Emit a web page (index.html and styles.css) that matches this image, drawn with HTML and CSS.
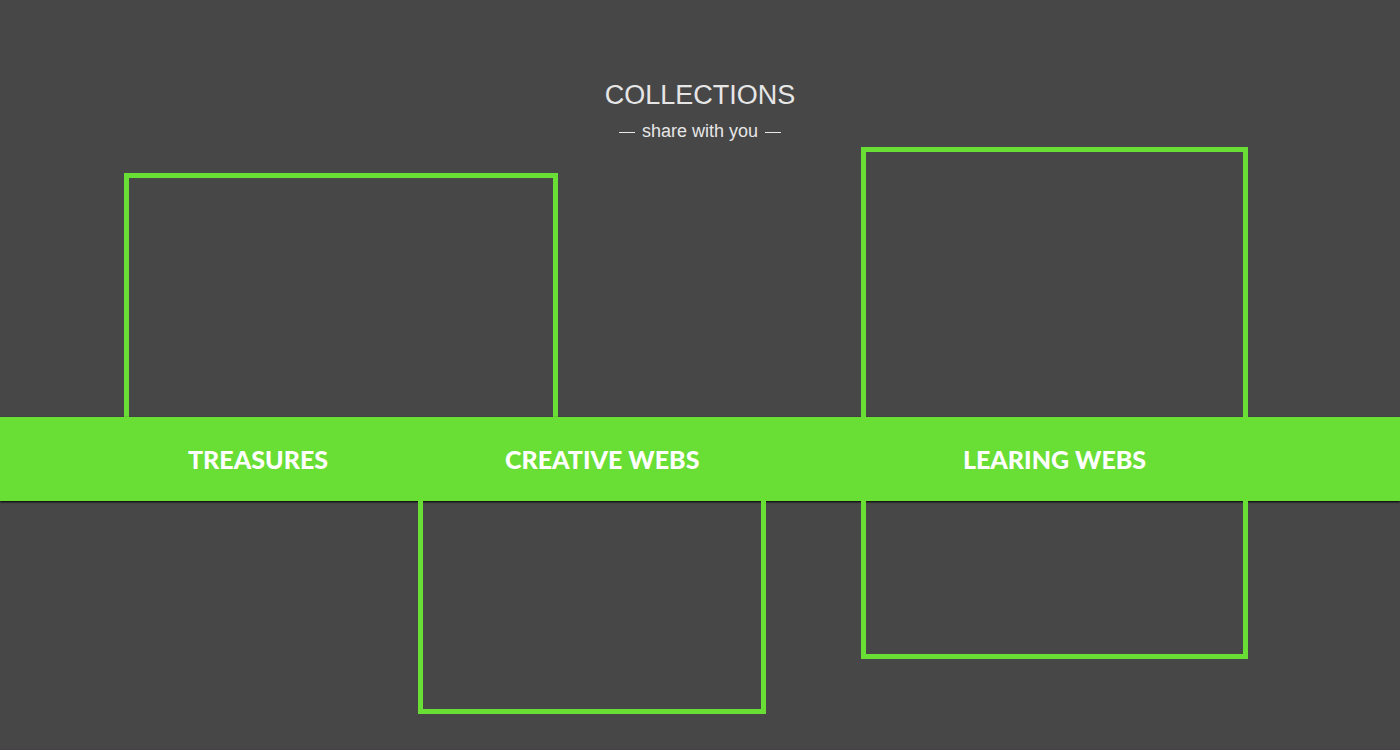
FILE: index.html
```html
<!DOCTYPE html>
<html lang="en">
<head>
<meta charset="utf-8">
<title>Collections</title>
<link rel="stylesheet" href="styles.css">
</head>
<body>
<main class="collections">
  <header class="heading">
    <h1 class="title">COLLECTIONS</h1>
    <p class="subtitle">share with you</p>
  </header>
  <div class="board">
    <div class="frame frame-treasures"></div>
    <div class="frame frame-creative"></div>
    <div class="frame frame-learning"></div>
    <div class="band"></div>
    <h2 class="label label-treasures">TREASURES</h2>
    <h2 class="label label-creative">CREATIVE WEBS</h2>
    <h2 class="label label-learning">LEARING WEBS</h2>
  </div>
</main>
</body>
</html>
```

FILE: styles.css
```css
* { box-sizing: border-box; }

body {
  margin: 0;
  background: #474747;
  color: #e6e6e6;
  font-family: "Liberation Sans", Arial, sans-serif;
}

.collections {
  min-height: 100vh;
  border-bottom: 1px solid #434143;
}

.heading {
  padding: 78px 0 4px;
  text-align: center;
}

.title {
  margin: 0;
  font-size: 27px;
  font-weight: 400;
  line-height: 34px;
}

.subtitle {
  display: flex;
  justify-content: center;
  align-items: center;
  gap: 7px;
  margin: 7px 0 0;
  font-size: 18px;
  line-height: 24px;
}

.subtitle::before,
.subtitle::after {
  content: "";
  width: 16px;
  height: 1px;
  margin-top: 2px;
  background: #e6e6e6;
}

/* Columns are shared by frames that overlap across rows. */
.board {
  display: grid;
  grid-template-columns: 124fr 294fr 140fr 208fr 95fr 387fr 152fr;
  grid-template-rows: 270px 84px 213px;
}

.frame { border: 5px solid #69de35; }

.frame-treasures {
  grid-area: 1 / 2 / 2 / 4;
  margin-top: 26px;
  border-bottom: 0;
}

.frame-creative {
  grid-area: 3 / 3 / 4 / 5;
  border-top: 0;
  z-index: 2;
}

.frame-learning {
  grid-area: 1 / 6 / 4 / 7;
  margin-bottom: 55px;
  z-index: 2;
}

.band {
  grid-area: 2 / 1 / 3 / -1;
  background: #69de35;
  box-shadow: 0 1px 2px #000000;
  z-index: 1;
}

.label {
  margin: 0;
  align-self: center;
  color: #ffffff;
  font-family: Lato, "Liberation Sans", sans-serif;
  font-size: 25px;
  font-weight: 900;
  line-height: 32px;
  white-space: nowrap;
  z-index: 3;
}

.label-treasures { grid-area: 2 / 2 / 3 / 4; padding-left: 64px; }
.label-creative { grid-area: 2 / 3 / 3 / 6; padding-left: 87px; }
.label-learning { grid-area: 2 / 6 / 3 / 7; text-align: center; }
```
